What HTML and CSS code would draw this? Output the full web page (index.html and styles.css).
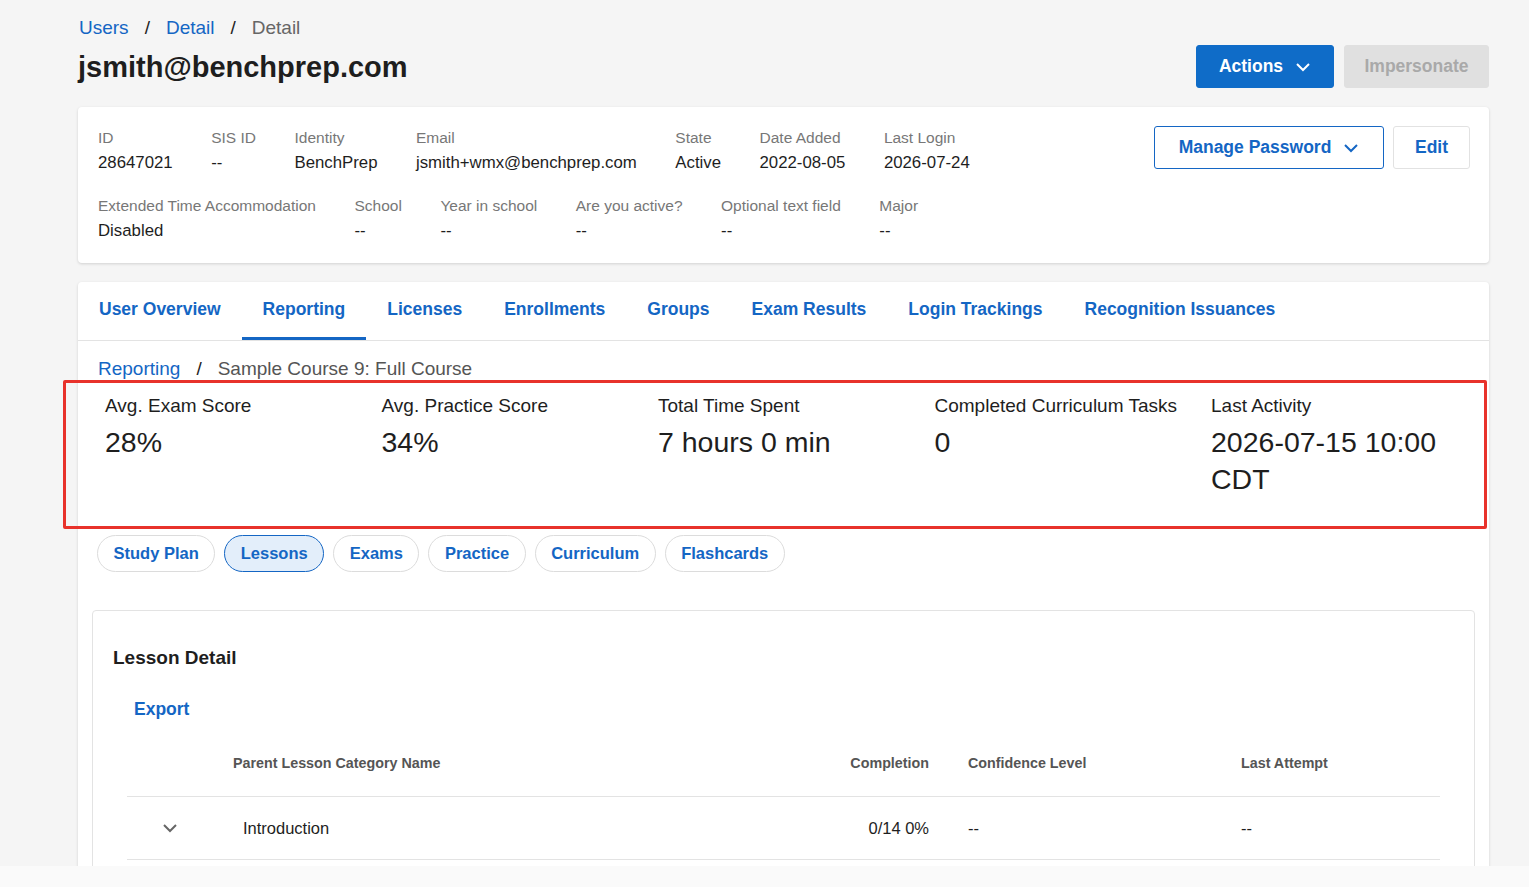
FILE: index.html
```html
<!DOCTYPE html>
<html lang="en">
<head>
    <meta charset="UTF-8">
    <title>User Detail</title>
    <link rel="stylesheet" href="styles.css">
</head>
<body>
    <div class="page">

        <!-- Header -->
        <div class="crumbs">
            <a href="#">Users</a><span class="sep">/</span><a href="#">Detail</a><span class="sep">/</span><span class="current">Detail</span>
        </div>
        <div class="title-row">
            <h1>jsmith@benchprep.com</h1>
            <div class="title-actions">
                <button class="btn btn-primary">Actions
                    <svg width="16" height="10" viewBox="0 0 16 10"><polyline points="2,2 8,8 14,2" fill="none" stroke="currentColor" stroke-width="2"/></svg>
                </button>
                <button class="btn btn-disabled">Impersonate</button>
            </div>
        </div>

        <!-- User info card -->
        <div class="card info-card">
            <div class="fields">
                <div class="field-row">
                    <div class="field"><div class="label">ID</div><div class="value">28647021</div></div>
                    <div class="field"><div class="label">SIS ID</div><div class="value">--</div></div>
                    <div class="field"><div class="label">Identity</div><div class="value">BenchPrep</div></div>
                    <div class="field"><div class="label">Email</div><div class="value">jsmith+wmx@benchprep.com</div></div>
                    <div class="field"><div class="label">State</div><div class="value">Active</div></div>
                    <div class="field"><div class="label">Date Added</div><div class="value">2022-08-05</div></div>
                    <div class="field"><div class="label">Last Login</div><div class="value">2026-07-24</div></div>
                </div>
                <div class="field-row">
                    <div class="field"><div class="label">Extended Time Accommodation</div><div class="value">Disabled</div></div>
                    <div class="field"><div class="label">School</div><div class="value">--</div></div>
                    <div class="field"><div class="label">Year in school</div><div class="value">--</div></div>
                    <div class="field"><div class="label">Are you active?</div><div class="value">--</div></div>
                    <div class="field"><div class="label">Optional text field</div><div class="value">--</div></div>
                    <div class="field"><div class="label">Major</div><div class="value">--</div></div>
                </div>
            </div>
            <div class="card-actions">
                <button class="btn btn-outline">Manage Password
                    <svg width="16" height="10" viewBox="0 0 16 10"><polyline points="2,2 8,8 14,2" fill="none" stroke="currentColor" stroke-width="2"/></svg>
                </button>
                <button class="btn btn-light">Edit</button>
            </div>
        </div>

        <!-- Tabs card -->
        <div class="card tabs-card">
            <div class="tabs">
                <a class="tab" href="#">User Overview</a>
                <a class="tab active" href="#">Reporting</a>
                <a class="tab" href="#">Licenses</a>
                <a class="tab" href="#">Enrollments</a>
                <a class="tab" href="#">Groups</a>
                <a class="tab" href="#">Exam Results</a>
                <a class="tab" href="#">Login Trackings</a>
                <a class="tab" href="#">Recognition Issuances</a>
            </div>

            <div class="tab-body">
                <div class="sub-crumbs">
                    <a href="#">Reporting</a><span class="sep">/</span><span class="current">Sample Course 9: Full Course</span>
                </div>

                <div class="stats">
                    <div class="stat"><div class="stat-label">Avg. Exam Score</div><div class="stat-value">28%</div></div>
                    <div class="stat"><div class="stat-label">Avg. Practice Score</div><div class="stat-value">34%</div></div>
                    <div class="stat"><div class="stat-label">Total Time Spent</div><div class="stat-value">7 hours 0 min</div></div>
                    <div class="stat"><div class="stat-label">Completed Curriculum Tasks</div><div class="stat-value">0</div></div>
                    <div class="stat"><div class="stat-label">Last Activity</div><div class="stat-value">2026-07-15 10:00 CDT</div></div>
                </div>

                <div class="pills">
                    <a class="pill" href="#">Study Plan</a>
                    <a class="pill active" href="#">Lessons</a>
                    <a class="pill" href="#">Exams</a>
                    <a class="pill" href="#">Practice</a>
                    <a class="pill" href="#">Curriculum</a>
                    <a class="pill" href="#">Flashcards</a>
                </div>

                <div class="lesson-card">
                    <h2>Lesson Detail</h2>
                    <a class="export" href="#">Export</a>
                    <table class="lesson-table">
                        <colgroup>
                            <col class="col-toggle">
                            <col class="col-name">
                            <col class="col-completion">
                            <col class="col-confidence">
                            <col>
                        </colgroup>
                        <thead>
                            <tr>
                                <th></th>
                                <th>Parent Lesson Category Name</th>
                                <th class="num">Completion</th>
                                <th class="conf">Confidence Level</th>
                                <th>Last Attempt</th>
                            </tr>
                        </thead>
                        <tbody>
                            <tr>
                                <td class="toggle">
                                    <svg width="16" height="10" viewBox="0 0 16 10"><polyline points="2,2 8,8 14,2" fill="none" stroke="#666" stroke-width="2"/></svg>
                                </td>
                                <td class="name">Introduction</td>
                                <td class="num">0/14 0%</td>
                                <td class="conf">--</td>
                                <td>--</td>
                            </tr>
                        </tbody>
                    </table>
                </div>
            </div>
        </div>
    </div>

    <div class="bottom-bar"></div>
</body>
</html>
```

FILE: styles.css
```css
body {
    margin: 0;
    background-color: #f5f5f5;
    font-family: "Liberation Sans", Arial, sans-serif;
    color: #222;
    overflow: hidden;
}
a {
    text-decoration: none;
    color: #1466c4;
}
button {
    font-family: inherit;
}
.page {
    margin: 0 40px 0 78px;
    padding-top: 17px;
}
.crumbs {
    font-size: 19px;
    line-height: 22px;
    padding-left: 1px;
}
.crumbs .sep {
    color: #222;
    margin: 0 16px;
}
.crumbs .current {
    color: #666;
}
.title-row {
    display: flex;
    justify-content: space-between;
    align-items: center;
    margin-top: 6px;
}
h1 {
    margin: 0;
    font-size: 29px;
    line-height: 34px;
    font-weight: bold;
    color: #1e1e1e;
}
.title-actions {
    display: flex;
    gap: 10px;
}
.btn {
    height: 43px;
    border-radius: 3px;
    font-size: 17.5px;
    font-weight: bold;
    padding: 0 20px;
    display: flex;
    align-items: center;
    justify-content: center;
    gap: 12px;
    cursor: pointer;
}
.btn-primary {
    background-color: #0f6cc8;
    border: 1px solid #0f6cc8;
    color: #fff;
    width: 138px;
}
.btn-disabled {
    background-color: #e0e0e0;
    border: 1px solid #e0e0e0;
    color: #a9a9a9;
    width: 145px;
}
.btn-outline {
    background-color: #fff;
    border: 1px solid #1466c4;
    color: #1466c4;
    width: 230px;
}
.btn-light {
    background-color: #fff;
    border: 1px solid #e2e2e2;
    color: #1466c4;
    width: 77px;
}
.card {
    background-color: #fff;
    border-radius: 4px;
    box-shadow: 0 1px 3px rgba(0, 0, 0, 0.15);
}
.info-card {
    margin-top: 19px;
    padding: 21px 19px 20px 20px;
    display: flex;
    justify-content: space-between;
}
.fields {
    display: flex;
    flex-direction: column;
    gap: 21px;
}
.field-row {
    display: flex;
    gap: 38.5px;
}
.label {
    font-size: 15.5px;
    line-height: 20px;
    color: #777;
}
.value {
    font-size: 16.8px;
    line-height: 24px;
    color: #1e1e1e;
    margin-top: 3px;
}
.card-actions {
    display: flex;
    gap: 9px;
    align-items: flex-start;
    margin-top: -2px;
}
.tabs-card {
    margin-top: 19px;
    height: 700px;
}
.tabs {
    display: flex;
    border-bottom: 1px solid #e3e3e3;
}
.tab {
    padding: 0 21px;
    line-height: 55px;
    border-bottom: 3px solid transparent;
    font-size: 17.5px;
    font-weight: bold;
    color: #1466c4;
}
.tab.active {
    border-bottom-color: #1466c4;
}
.tab-body {
    padding: 0 14px;
}
.sub-crumbs {
    font-size: 19px;
    line-height: 22px;
    padding: 17px 0 0 6px;
    color: #555;
}
.sub-crumbs .sep {
    color: #222;
    margin: 0 16px;
}
.stats {
    margin: 0 -12px 0 -29px;
    border: 3px solid #e8322b;
    border-radius: 2px;
    padding: 12px 0 28px 39px;
    display: grid;
    grid-template-columns: repeat(4, 276.5px) 1fr;
}
.stat-label {
    font-size: 19px;
    line-height: 22px;
    color: #1e1e1e;
}
.stat-value {
    font-size: 28.5px;
    line-height: 37px;
    color: #1e1e1e;
    margin-top: 7px;
    padding-right: 20px;
}
.pills {
    display: flex;
    gap: 9px;
    margin: 6px 0 0 5px;
}
.pill {
    height: 35px;
    line-height: 35px;
    padding: 0 15.5px;
    border: 1px solid #dcdcdc;
    border-radius: 20px;
    font-size: 16.5px;
    font-weight: bold;
    color: #1466c4;
}
.pill.active {
    background-color: #e3eefa;
    border-color: #1466c4;
}
.lesson-card {
    margin-top: 38px;
    border: 1px solid #e3e3e3;
    border-radius: 4px;
    padding: 36px 20px 60px 20px;
}
h2 {
    margin: 0;
    font-size: 19px;
    line-height: 22px;
    color: #1e1e1e;
}
.export {
    display: inline-block;
    margin: 30px 0 0 21px;
    font-size: 17.5px;
    line-height: 20px;
    font-weight: bold;
}
.lesson-table {
    width: calc(100% - 28px);
    margin: 10px 14px 0 14px;
    border-collapse: collapse;
    table-layout: fixed;
}
.col-toggle {
    width: 100px;
}
.col-name {
    width: 602px;
}
.col-completion {
    width: 106px;
}
.col-confidence {
    width: 300px;
}
.lesson-table th {
    height: 67px;
    text-align: left;
    font-size: 14.3px;
    color: #555;
    padding: 0 6px;
    border-bottom: 1px solid #e3e3e3;
}
.lesson-table td {
    height: 62px;
    font-size: 16.5px;
    line-height: 20px;
    color: #1e1e1e;
    padding: 0 6px;
    border-bottom: 1px solid #e3e3e3;
}
.lesson-table .num {
    text-align: right;
}
.lesson-table .conf {
    padding-left: 33px;
}
.lesson-table td.name {
    padding-left: 16px;
}
.lesson-table td.toggle {
    padding: 0 0 0 35px;
}
.lesson-table td.toggle svg {
    display: block;
}
.bottom-bar {
    position: fixed;
    left: 0;
    right: 0;
    bottom: 0;
    height: 21px;
    background-color: #fafafa;
}
```
